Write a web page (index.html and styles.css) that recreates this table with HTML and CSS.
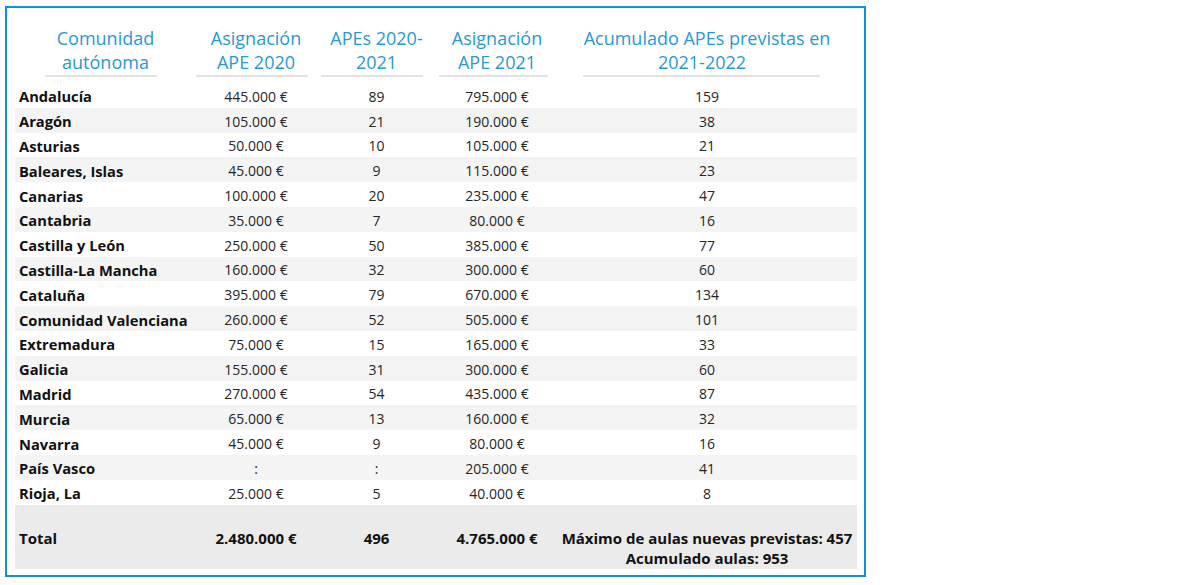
FILE: index.html
```html
<!DOCTYPE html>
<html lang="es">
<head>
<meta charset="utf-8">
<title>Asignación APE por comunidad autónoma</title>
<link rel="stylesheet" href="styles.css">
</head>
<body>
<div class="frame">
  <div class="head grid">
    <div class="hc c1"><div class="ht">Comunidad<br>autónoma</div><div class="ul"></div></div>
    <div class="hc c2"><div class="ht">Asignación<br>APE 2020</div><div class="ul"></div></div>
    <div class="hc c3"><div class="ht">APEs 2020-<br>2021</div><div class="ul"></div></div>
    <div class="hc c4"><div class="ht">Asignación<br>APE 2021</div><div class="ul"></div></div>
    <div class="hc c5"><div class="ht">Acumulado APEs previstas en<br><span class="l2">2021-2022</span></div><div class="ul"></div></div>
  </div>
  <div class="rows">
    <div class="row grid"><div class="name">Andalucía</div><div>445.000 €</div><div>89</div><div>795.000 €</div><div>159</div></div>
    <div class="row grid"><div class="name">Aragón</div><div>105.000 €</div><div>21</div><div>190.000 €</div><div>38</div></div>
    <div class="row grid"><div class="name">Asturias</div><div>50.000 €</div><div>10</div><div>105.000 €</div><div>21</div></div>
    <div class="row grid"><div class="name">Baleares, Islas</div><div>45.000 €</div><div>9</div><div>115.000 €</div><div>23</div></div>
    <div class="row grid"><div class="name">Canarias</div><div>100.000 €</div><div>20</div><div>235.000 €</div><div>47</div></div>
    <div class="row grid"><div class="name">Cantabria</div><div>35.000 €</div><div>7</div><div>80.000 €</div><div>16</div></div>
    <div class="row grid"><div class="name">Castilla y León</div><div>250.000 €</div><div>50</div><div>385.000 €</div><div>77</div></div>
    <div class="row grid"><div class="name">Castilla-La Mancha</div><div>160.000 €</div><div>32</div><div>300.000 €</div><div>60</div></div>
    <div class="row grid"><div class="name">Cataluña</div><div>395.000 €</div><div>79</div><div>670.000 €</div><div>134</div></div>
    <div class="row grid"><div class="name">Comunidad Valenciana</div><div>260.000 €</div><div>52</div><div>505.000 €</div><div>101</div></div>
    <div class="row grid"><div class="name">Extremadura</div><div>75.000 €</div><div>15</div><div>165.000 €</div><div>33</div></div>
    <div class="row grid"><div class="name">Galicia</div><div>155.000 €</div><div>31</div><div>300.000 €</div><div>60</div></div>
    <div class="row grid"><div class="name">Madrid</div><div>270.000 €</div><div>54</div><div>435.000 €</div><div>87</div></div>
    <div class="row grid"><div class="name">Murcia</div><div>65.000 €</div><div>13</div><div>160.000 €</div><div>32</div></div>
    <div class="row grid"><div class="name">Navarra</div><div>45.000 €</div><div>9</div><div>80.000 €</div><div>16</div></div>
    <div class="row grid"><div class="name">País Vasco</div><div>:</div><div>:</div><div>205.000 €</div><div>41</div></div>
    <div class="row grid"><div class="name">Rioja, La</div><div>25.000 €</div><div>5</div><div>40.000 €</div><div>8</div></div>
  </div>
  <div class="total grid">
    <div class="name">Total</div><div>2.480.000 €</div><div>496</div><div>4.765.000 €</div><div>Máximo de aulas nuevas previstas: 457<br>Acumulado aulas: 953</div>
  </div>
</div>
</body>
</html>
```

FILE: styles.css
```css
body {
  margin: 0;
  background: #ffffff;
  font-family: "Open Sans", Lato, sans-serif;
  color: #1c1c1c;
}

.frame {
  margin: 6px 0 0 5px;
  border: 2px solid #1190d2;
  padding: 0 7px 0 8px;
  box-sizing: content-box;
  width: 842px;
  height: 567px;
}

.grid {
  display: grid;
  grid-template-columns: 181px 120px 121px 120px 300px;
}

.head {
  padding-top: 18px;
  margin-bottom: 6px;
}

.ht {
  color: #2799d9;
  font-size: 18px;
  line-height: 24px;
  text-align: center;
  white-space: nowrap;
  height: 48px;
  margin-bottom: 1px;
}

.ul {
  height: 2px;
  background: #e4e4e4;
}

.c1 .ul { margin: 0 39px 0 30px; }
.c2 .ul { margin: 0 8px 0 0; }
.c3 .ul { margin: 0 14px 0 5px; }
.c4 .ul { margin: 0 9px 0 2px; }
.c5 .ul { margin: 0 37px 0 26px; }

.c5 .l2 { margin-right: 10px; }

.row {
  height: 24.8px;
  box-sizing: border-box;
  padding-top: 2px;
  align-items: center;
  font-size: 14px;
  text-align: center;
  color: #262626;
}

.row:nth-child(even) {
  background: #f4f4f4;
}

.name {
  text-align: left;
  padding-left: 4px;
  font-weight: 700;
  font-size: 14.7px;
  color: #111111;
}

.total {
  height: 64px;
  box-sizing: border-box;
  padding-top: 23px;
  background: #ebebeb;
  font-size: 15px;
  line-height: 20px;
  font-weight: 700;
  text-align: center;
  color: #111111;
}

.total .name {
  font-size: 15px;
}
```
